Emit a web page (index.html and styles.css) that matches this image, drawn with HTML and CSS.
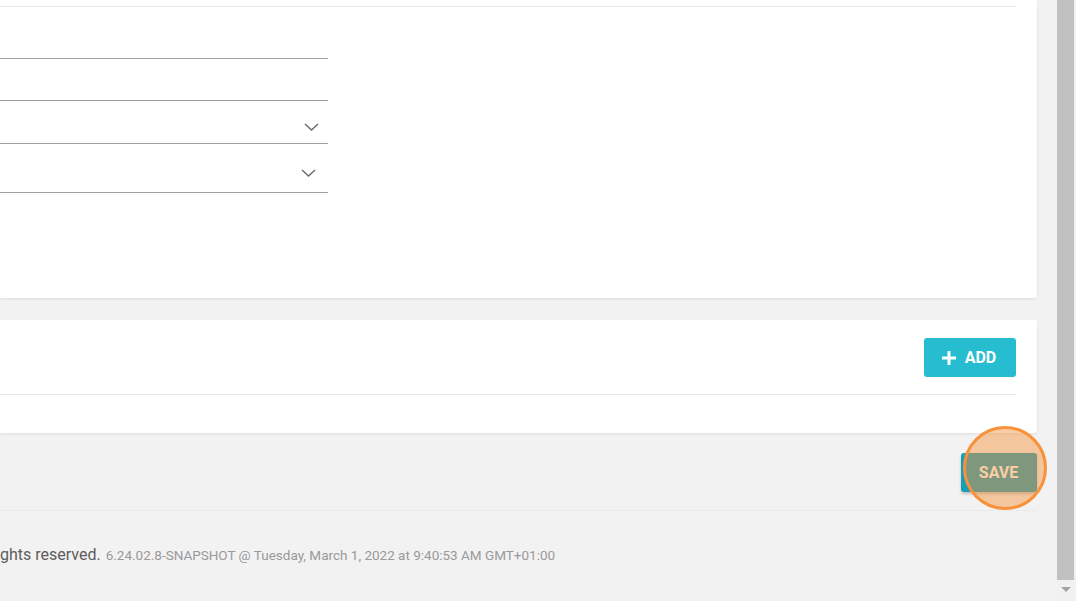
FILE: index.html
```html
<!DOCTYPE html>
<html lang="en">
<head>
<meta charset="utf-8">
<title>Form</title>
<link rel="stylesheet" href="styles.css">
</head>
<body>
<div class="layout">
  <div class="main">
    <section class="card card-form">
      <div class="card-head"></div>
      <div class="fields">
        <div class="field field-1"></div>
        <div class="field field-2"></div>
        <div class="field field-3 select">
          <svg class="chev" width="15" height="8" viewBox="0 0 15 8"><path d="M1 1 L7.5 7 L14 1" fill="none" stroke="#6b6b6b" stroke-width="1.5"/></svg>
        </div>
        <div class="field field-4 select">
          <svg class="chev" width="15" height="8" viewBox="0 0 15 8"><path d="M1 1 L7.5 7 L14 1" fill="none" stroke="#6b6b6b" stroke-width="1.5"/></svg>
        </div>
      </div>
    </section>

    <section class="card card-list">
      <div class="list-head">
        <button class="btn btn-add" type="button">
          <svg width="14" height="14" viewBox="0 0 14 14"><rect x="5.5" y="0" width="3" height="14" fill="#fff"/><rect x="0" y="5.5" width="14" height="3" fill="#fff"/></svg>
          <span>ADD</span>
        </button>
      </div>
    </section>

    <div class="actions">
      <div class="save-wrap">
        <button class="btn btn-save" type="button">SAVE</button>
        <span class="highlight"></span>
      </div>
    </div>

    <footer class="footer">
      <span class="rights">ghts reserved.</span>
      <span class="version">6.24.02.8-SNAPSHOT @ Tuesday, March 1, 2022 at 9:40:53 AM GMT+01:00</span>
    </footer>
  </div>

  <div class="scrollbar">
    <div class="thumb"></div>
    <div class="arrow"></div>
  </div>
</div>
</body>
</html>
```

FILE: styles.css
```css
html, body {
  margin: 0;
  padding: 0;
  height: 601px;
  overflow: hidden;
  background: #f2f2f2;
  font-family: Roboto, "Liberation Sans", sans-serif;
}

.layout {
  display: flex;
  height: 601px;
}

.main {
  flex: 1;
  display: flex;
  flex-direction: column;
  padding-right: 20px;
  min-width: 0;
}

.card {
  background: #fff;
  box-shadow: 0 1px 3px rgba(0, 0, 0, 0.09);
  border-radius: 0 0 3px 0;
}

.card-form {
  height: 298px;
  padding-right: 21px;
}

.card-head {
  height: 6px;
  border-bottom: 1px solid #e8e8e8;
}

.fields {
  width: 328px;
  display: flex;
  flex-direction: column;
}

.field {
  border-bottom: 1px solid #9e9e9e;
  display: flex;
  justify-content: flex-end;
  align-items: flex-end;
}

.field-1 { height: 51px; }
.field-2 { height: 41px; }
.field-3 { height: 42px; }
.field-4 { height: 48px; }

.field-3 .chev { margin: 0 9px 12px 0; }
.field-4 .chev { margin: 0 12px 15px 0; }

.card-list {
  margin-top: 22px;
  height: 113px;
  padding-right: 21px;
  box-sizing: border-box;
}

.list-head {
  display: flex;
  justify-content: flex-end;
  padding-top: 18px;
  height: 56px;
  border-bottom: 1px solid #e8e8e8;
}

.btn {
  border: none;
  border-radius: 3px;
  color: #fff;
  font-family: Roboto, "Liberation Sans", sans-serif;
  font-weight: 700;
  font-size: 16px;
  height: 39px;
  display: flex;
  align-items: center;
  justify-content: center;
  padding: 0;
  cursor: pointer;
}

.btn-add {
  width: 92px;
  background: #27bdd0;
  gap: 9px;
  padding-right: 2px;
}

.actions {
  display: flex;
  justify-content: flex-end;
  padding-top: 20px;
  height: 78px;
  box-sizing: border-box;
  border-bottom: 1px solid #e9e9e9;
}

.save-wrap {
  position: relative;
  width: 76px;
  height: 39px;
}

.btn-save {
  width: 76px;
  background: #1a9db6;
  box-shadow: 0 2px 3px rgba(0, 0, 0, 0.2);
  padding-right: 1px;
}

.highlight {
  position: absolute;
  left: 2px;
  top: -27px;
  width: 84px;
  height: 84px;
  box-sizing: border-box;
  border-radius: 50%;
  border: 3px solid #f7923a;
  background: rgba(247, 146, 58, 0.46);
  pointer-events: none;
}

.footer {
  flex: 1;
  display: flex;
  align-items: baseline;
  gap: 5px;
  padding-top: 34px;
  box-sizing: border-box;
  white-space: nowrap;
}

.rights {
  font-size: 16px;
  color: #5c5c5c;
}

.version {
  font-size: 13.5px;
  color: #999;
}

.scrollbar {
  width: 19px;
  flex: none;
  background: #f1f1f1;
  display: flex;
  flex-direction: column;
}

.thumb {
  height: 580px;
  width: 17px;
  background: #c1c1c1;
}

.arrow {
  margin: 7px 0 0 4px;
  width: 0;
  height: 0;
  border-left: 5px solid transparent;
  border-right: 5px solid transparent;
  border-top: 5px solid #a3a3a3;
}
```
